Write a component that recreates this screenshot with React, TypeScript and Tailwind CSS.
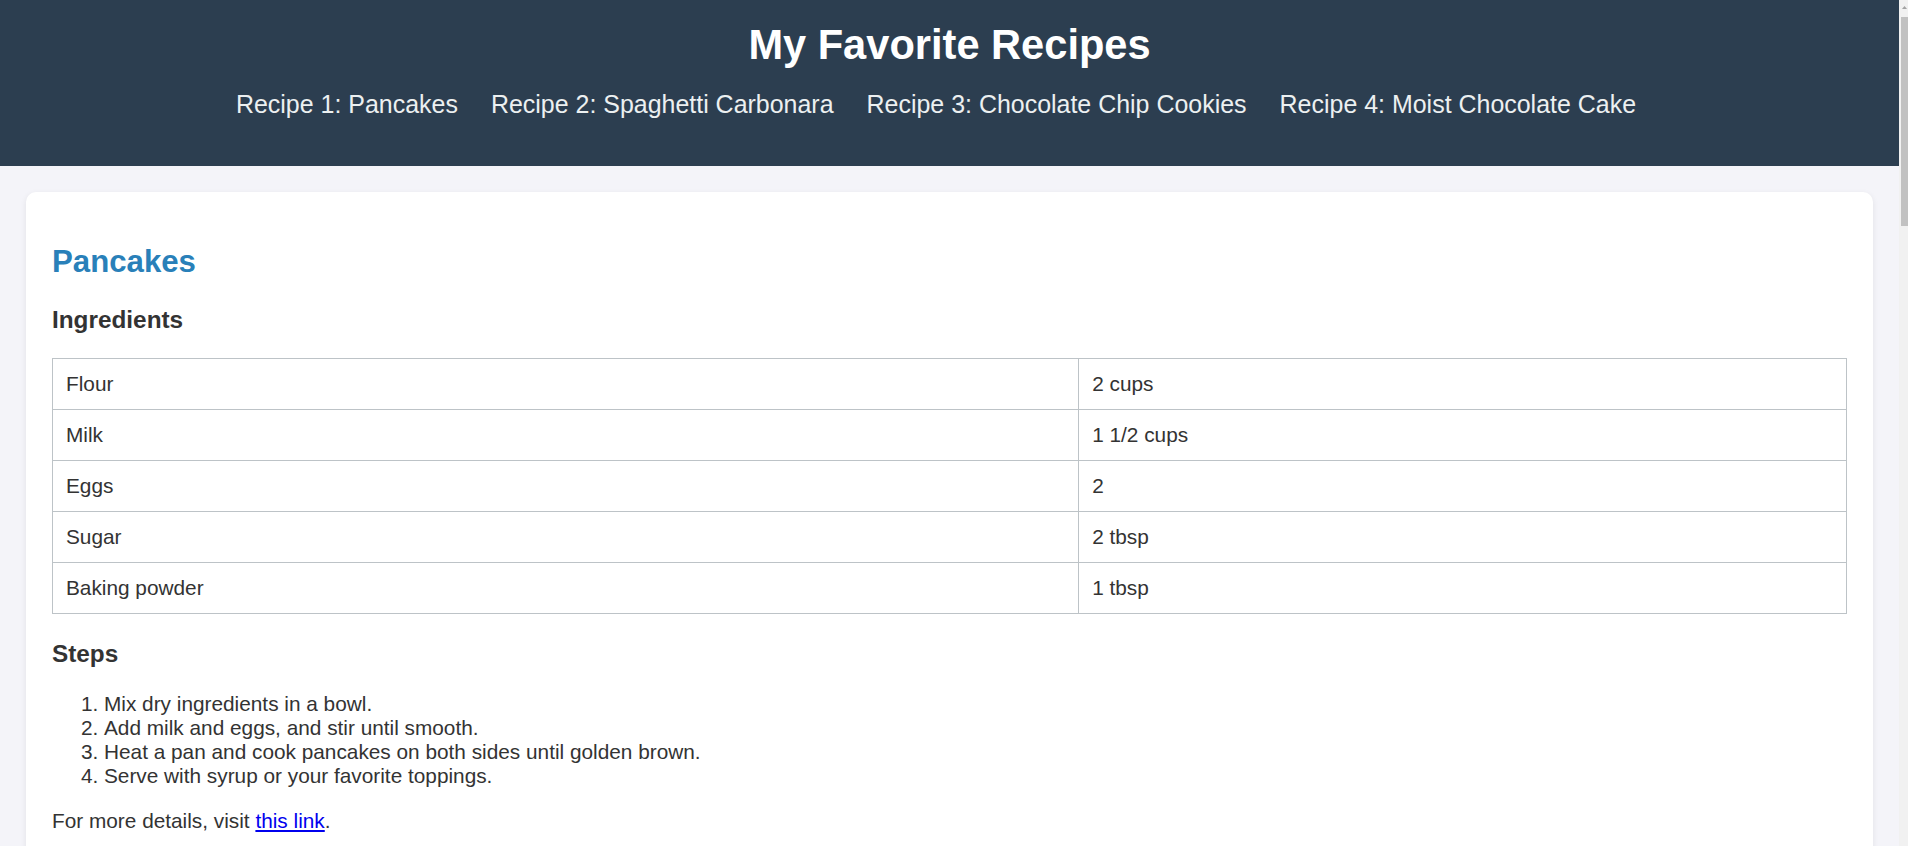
import React from "react";

type Recipe = {
  id: string;
  title: string;
  ingredients: [string, string][];
  steps: string[];
  link: string;
};

const recipes: Recipe[] = [
  {
    id: "recipe1",
    title: "Pancakes",
    ingredients: [
      ["Flour", "2 cups"],
      ["Milk", "1 1/2 cups"],
      ["Eggs", "2"],
      ["Sugar", "2 tbsp"],
      ["Baking powder", "1 tbsp"],
    ],
    steps: [
      "Mix dry ingredients in a bowl.",
      "Add milk and eggs, and stir until smooth.",
      "Heat a pan and cook pancakes on both sides until golden brown.",
      "Serve with syrup or your favorite toppings.",
    ],
    link: "#pancakes",
  },
  {
    id: "recipe2",
    title: "Spaghetti Carbonara",
    ingredients: [
      ["Spaghetti", "200g"],
      ["Pancetta", "100g"],
      ["Eggs", "2"],
      ["Parmesan cheese", "50g"],
      ["Black pepper", "To taste"],
    ],
    steps: [
      "Cook spaghetti according to package instructions.",
      "Fry pancetta in a pan until crispy.",
      "Beat eggs with grated Parmesan cheese.",
      "Combine spaghetti, pancetta, and egg mixture off the heat.",
      "Season with black pepper and serve immediately.",
    ],
    link: "#carbonara",
  },
  {
    id: "recipe3",
    title: "Chocolate Chip Cookies",
    ingredients: [
      ["Butter", "1 cup"],
      ["Sugar", "1 cup"],
      ["Brown sugar", "1 cup"],
      ["Eggs", "2"],
      ["Flour", "3 cups"],
      ["Chocolate chips", "2 cups"],
    ],
    steps: [
      "Preheat oven to 350°F (175°C).",
      "Cream together butter and sugars.",
      "Beat in eggs, then stir in flour.",
      "Fold in chocolate chips.",
      "Drop spoonfuls onto a baking sheet and bake for 10 minutes.",
    ],
    link: "#cookies",
  },
  {
    id: "recipe4",
    title: "Moist Chocolate Cake",
    ingredients: [
      ["Flour", "2 cups"],
      ["Sugar", "2 cups"],
      ["Cocoa powder", "3/4 cup"],
      ["Eggs", "2"],
      ["Milk", "1 cup"],
      ["Vegetable oil", "1/2 cup"],
    ],
    steps: [
      "Preheat oven to 350°F (175°C) and grease a cake pan.",
      "Mix flour, sugar, and cocoa powder in a bowl.",
      "Add eggs, milk, and oil, and beat until smooth.",
      "Pour batter into the pan and bake for 30–35 minutes.",
      "Let cool before frosting and serving.",
    ],
    link: "#cake",
  },
];

const navItems = [
  "Recipe 1: Pancakes",
  "Recipe 2: Spaghetti Carbonara",
  "Recipe 3: Chocolate Chip Cookies",
  "Recipe 4: Moist Chocolate Cake",
];

function RecipeCard({ r }: { r: Recipe }) {
  return (
    <section id={r.id} className="bg-white rounded-[10px] p-[26px] shadow-[0_2px_6px_rgba(0,0,0,0.08)]">
      <h2 className="text-[31.2px] font-bold text-[#2980b9] leading-[normal] mt-[26px] mb-[26px]">
        {r.title}
      </h2>
      <h3 className="text-[24.34px] font-bold leading-[normal] mb-[24.3px]">Ingredients</h3>
      <table className="w-full border-collapse">
        <tbody>
          {r.ingredients.map(([name, qty]) => (
            <tr key={name}>
              <td className="w-[57.2%] border border-[#bdc3c7] px-[13px] py-[13px] text-left leading-[normal]">
                {name}
              </td>
              <td className="border border-[#bdc3c7] px-[13px] py-[13px] text-left leading-[normal]">
                {qty}
              </td>
            </tr>
          ))}
        </tbody>
      </table>
      <h3 className="text-[24.34px] font-bold leading-[normal] mt-[26px] mb-[24.3px]">Steps</h3>
      <ol className="list-decimal pl-[52px] mb-[20.8px] leading-[normal]">
        {r.steps.map((s) => (
          <li key={s}>{s}</li>
        ))}
      </ol>
      <p className="leading-[normal] mb-[20.8px]">
        For more details, visit{" "}
        <a href={r.link} className="text-[#0000ee] underline">
          this link
        </a>
        .
      </p>
    </section>
  );
}

function Scrollbar() {
  return (
    <div className="w-[9px] h-screen bg-[#f1f1f1] flex flex-col items-end shrink-0">
      <svg width="7" height="12" viewBox="0 0 7 12" className="mt-[2px]">
        <path d="M1 7 L3.5 4 L6 7 Z" fill="#a3a3a3" />
      </svg>
      <div className="mt-[3px] w-[7px] h-[209px] bg-[#c1c1c1]" />
    </div>
  );
}

export default function App() {
  return (
    <div className="flex h-screen overflow-hidden bg-[#f4f4f9] text-[#333] text-[20.8px] leading-[normal] font-['Liberation_Sans',Arial,Helvetica,sans-serif]">
      <div className="flex-1 min-w-0 h-screen overflow-y-auto [scrollbar-width:none]">
        <header className="bg-[#2c3e50] text-white text-center pt-[20.8px] pb-[47px]">
          <h1 className="text-[41.6px] font-bold leading-[normal]">My Favorite Recipes</h1>
          <nav className="mt-[21px] flex justify-center gap-[33px] pr-[27px] text-[24.96px] leading-[normal]">
            {navItems.map((n, i) => (
              <a key={n} href={`#recipe${i + 1}`} className="text-[#ecf0f1] no-underline">
                {n}
              </a>
            ))}
          </nav>
        </header>
        <main className="p-[26px] flex flex-col gap-[26px]">
          {recipes.map((r) => (
            <RecipeCard key={r.id} r={r} />
          ))}
        </main>
      </div>
      <Scrollbar />
    </div>
  );
}
